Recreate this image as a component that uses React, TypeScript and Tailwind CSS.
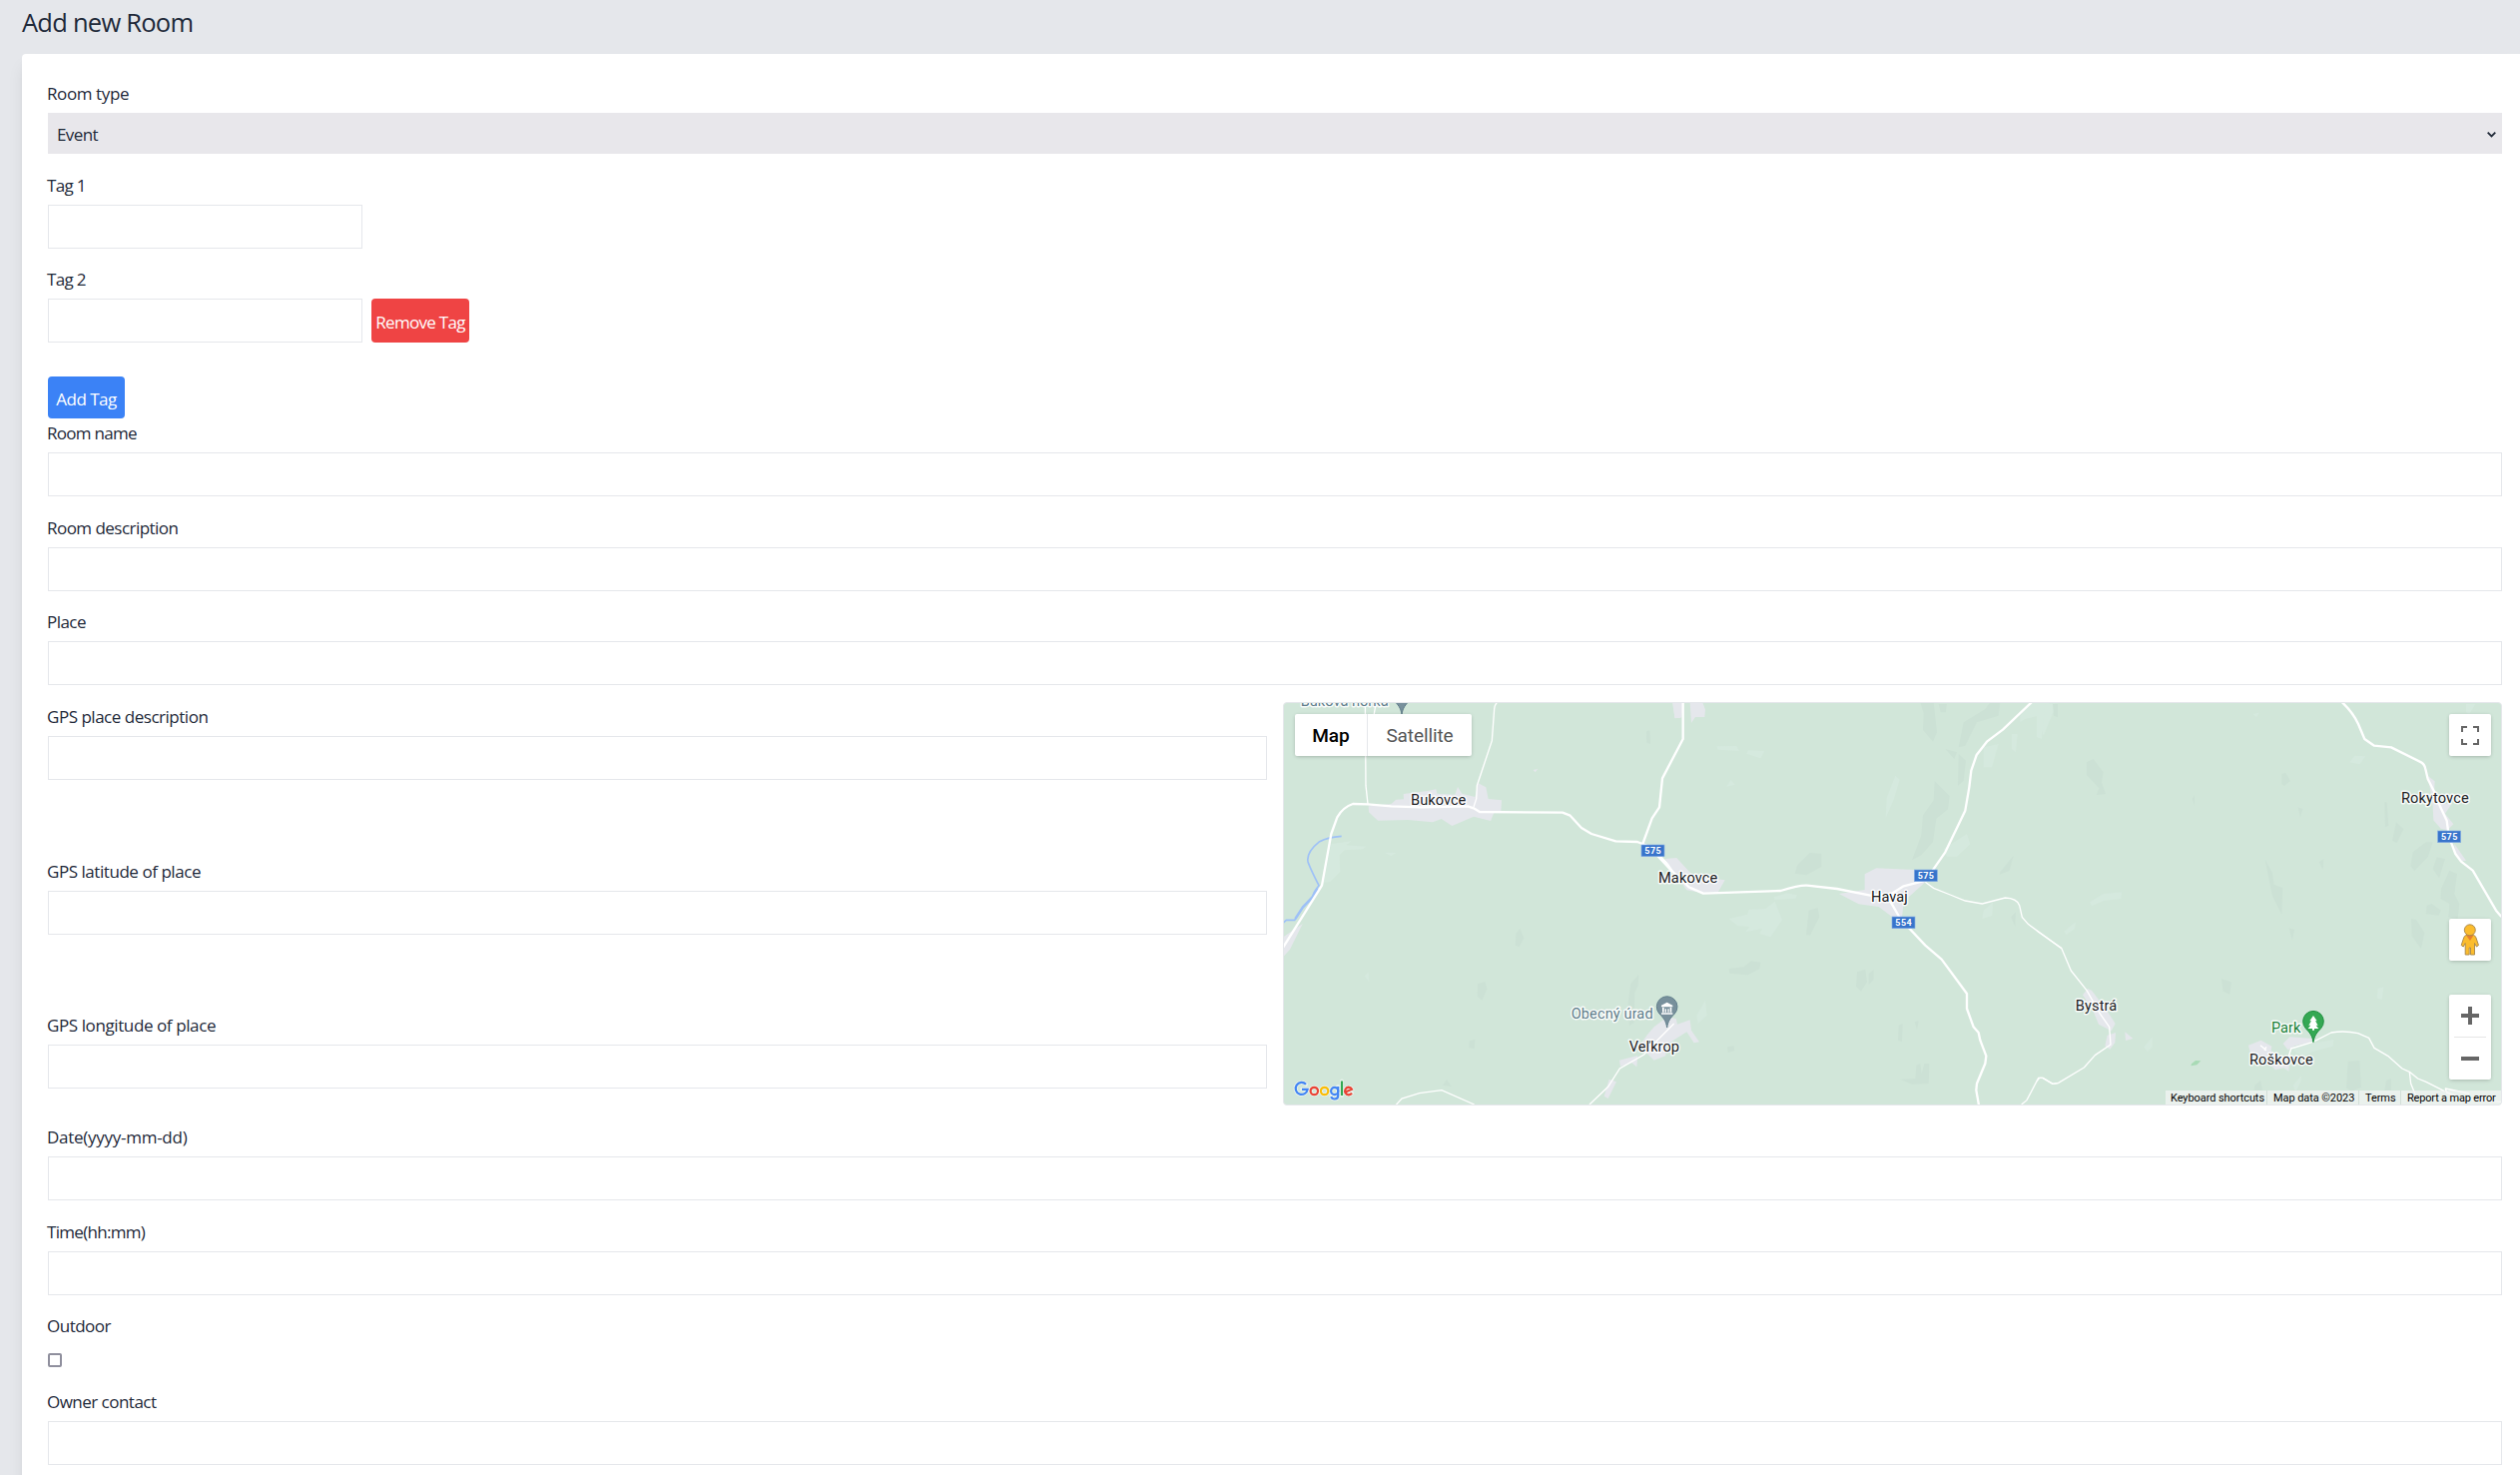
import type { ReactNode } from "react";

type FieldProps = { label: string; tracking: string; className?: string; children?: ReactNode };

const inputClass = "block h-11 w-full border border-gray-200 bg-white px-2 outline-none";

function Field({ label, tracking, className = "", children }: FieldProps) {
  return (
    <div className={className}>
      <label className={`-ml-px mb-[5px] block h-[29px] whitespace-nowrap leading-[29px] ${tracking}`}>{label}</label>
      {children ?? <input className={inputClass} />}
    </div>
  );
}

type LabelProps = { x: number; y: number; w: number; color?: string; children: string };

/* Place name with the white halo used on map tiles */
function Place({ x, y, w, color = "#202124", children }: LabelProps) {
  return (
    <text x={x} y={y} textLength={w} fontSize="44" fill={color} stroke="#fff" strokeWidth="9" strokeLinejoin="round" strokeOpacity=".85" paintOrder="stroke">
      {children}
    </text>
  );
}

function Shield({ x, y, children }: { x: number; y: number; children: string }) {
  return (
    <g>
      <rect x={x} y={y} width="69" height="35" fill="#3874cb" stroke="#86aee4" strokeWidth="2" />
      <text x={x + 34.5} y={y + 27} textAnchor="middle" textLength="49" fontSize="27" fontWeight="700" fill="#fff">
        {children}
      </text>
    </g>
  );
}

function Pin({ x, y, fill, stroke, children }: { x: number; y: number; fill: string; stroke: string; children?: ReactNode }) {
  return (
    <g transform={`translate(${x} ${y})`}>
      <path d="M0 0C-3-22-12-30-23-42A31 31 0 1 1 23-42C12-30 3-22 0 0Z" fill={fill} stroke={stroke} strokeWidth="3" />
      {children}
    </g>
  );
}

function Terrain() {
  return (
    <>
      <g transform="translate(1270 690) scale(.33333)">
        <g fill="#d5e9de">
          <path d="M190 465l60-8-15 12 60 4-10 8-55 3-15 15 2 50-30 30-20 2z" />
          <path d="M350 491l35 1-15 9zM290 862l12-12 2 30z" />
        </g>
        <g fill="#cce1d5">
          <path d="M745 735l12-15 12 28-14 27-12-5zM630 885l22-6 6 22-15 34-14-12zM605 1057l17-5-2 29-16-3zM525 1190l12-18 15 22zM1090 885l24-28-2 35-10 20-2 90-14 10-4-70zM1137 130l9-4 2 38-10-3z" />
        </g>
        <g fill="#e5e7ec">
          <path d="M302 352L370 345 385 332 408 331 407 315 480 306 505 301 508 314 562 317 570 294 583 314 622 324 632 283 655 295 662 330 702 334 700 366 680 370 669 396 618 383 553 411 521 390 495 400 420 393 330 395 303 370Z" />
          <path d="M46 745L104 705 66 782 46 804ZM797 243l14-3-8 10z" />
          <path d="M1215 40l33 0-5 45-20 3z" />
          <path d="M1117 1070L1140 1038 1160 1015 1200 985 1226 990 1230 1007 1268 994 1272 1025 1296 1060 1280 1063 1258 1030 1230 1048 1195 1070 1195 1102 1160 1115 1140 1095ZM1056 1115l55-14-3 34-15-12-34 11zM1025 1172l22 8-25 50-12-7z" />
        </g>
        <g fill="none" stroke="#9ec1f7" strokeWidth="5">
          <path d="M221 442Q180 445 155 458 115 490 120 518 125 535 153 590 132 615 134 628L105 655 80 694H55L46 702" />
          <path d="M150 600L136 622 105 655 82 690" strokeWidth="7" />
        </g>
        <g fill="none" stroke="#fff" strokeWidth="4">
          <path d="M292 40L294 290 300 345M324 45L318 80M688 40Q680 50 680 60L673 155 628 290 626 330 618 354M1220 1005L1160 1065 1130 1098 1057 1140 1022 1195 966 1248M384 1250L402 1230 455 1214 522 1205 620 1248" />
        </g>
        <g fill="none" stroke="#fff" strokeWidth="7" strokeLinejoin="round">
          <path d="M46 775L162 590 190 435 208 385Q225 355 255 345L300 346 370 352 460 355 600 352 618 358 636 369 885 371 908 380 942 417 972 435 1045 457 1110 459 1150 475 1190 515 1245 570" />
        </g>
      </g>
      <g transform="translate(1640 690) scale(.33333)">
        <g fill="#d5e9de">
          <path d="M238 172l60-1 8 15-64-4zM333 184l49 2-12 22-42-14zM268 293l12-20 14 14zM775 260l13 12-18 60-24 55 3-60zM275 690l55-13 5-15 50-2 28-22 22 55-35 52-33-10 8-15-50 10 12-16-35-2zM410 625l40-12 30 6-5 10-62 4zM920 480l70-45 10 30-40 38-30 0zM1150 80l30-40h30l50 5-40 95-15-60-40 10-15 10zM1125 135h17l-5 55-12-10zM1040 175l45-10-20 70-25 0zM1040 665l28-25-2 40-30 10zM178 980l26-45 5 45-27 25z" />
        </g>
        <g fill="#cce1d5">
          <path d="M850 40h40l10 90-12 28-30-35 2-50zM905 45h24l-2 25-16 0zM980 100l65-40 15-20h30l-5 40-65 20-35 70-20 5zM925 180l35 10-8 20zM965 195l22 20-7 60-17 15zM893 276l45 45-5 40-35 28-10 70-35 40-28 15 28-75 5-60 32-45zM480 530l38-38 35 2v40l-45 25-35-5zM1090 550l40-50-12 45-30 12zM510 710l5-45 27-8 5 28-28 55-12-2zM275 840l45-5 22-18 28 4-3 20-35 18-55-5zM660 850l25-8 5 38-18 28-15-15zM695 855l15-12v30l-15 15zM785 1010l12-5-2 55-12-5zM838 1130l12-5 4 30 8-30h15l-2 60-50 2-35-15 45-2zM270 1075l20-3 2 15-20 5zM1123 685l14-15-2 45zM27 127l10-3 2 40-10-5zM833 1000l12-3-5 25z" />
        </g>
        <g fill="#e5e7ec">
          <path d="M107 40h33l-10 47h-18zM158 40h38l8 22-2 22-28 0-12 18zM83 510l35-3 50 55 95 12-20 35-50 3-45-8zM606 615l77-12v-47l35-18 115 5 10 25 22 12-65 58-5 48-30-2-40-30-60-8z" />
        </g>
        <g fill="none" stroke="#fff" strokeWidth="4">
          <path d="M865 580L890 598 940 618 985 636 1036 645 1105 627Q1140 628 1148 650L1156 685 1174 706 1262 770 1272 778M1154 1248L1170 1235 1205 1168H1218L1248 1186 1265 1184" />
        </g>
        <g fill="none" stroke="#fff" strokeWidth="7" strokeLinejoin="round">
          <path d="M137 40V150L75 268 66 355 44 388 16 465M60 500L100 543 155 595 198 614 430 606Q490 588 510 590L600 600 700 620 760 617 800 592 866 575 925 490 985 365 997 295 1003 245 1019 198 1050 158 1098 122 1184 40M760 638L790 690 865 770 914 812 990 915V960L1010 1015 1025 1032 1030 1055 1048 1102 1045 1125 1020 1185 1018 1205 1026 1250" />
        </g>
      </g>
      <g transform="translate(2040 690) scale(.33333)">
        <g fill="#d5e9de">
          <path d="M0 40h25l-10 110L0 145zM160 640l40-25 55-5-2 20-50 5-38 16zM82 728l35-28-3 20-25 18zM940 220l15-20 33 2-18 24zM650 75l18-4-8 14zM1290 45h28l-18 30-10-5zM322 1075l25-30v30l-15 14zM1025 900l17-5-5 38-15-5zM770 1085l10-12 112-20-2 20-60 16-30 15zM770 1190l25-30-2 20-15 30z" />
        </g>
        <g fill="#cce1d5">
          <path d="M150 220l20-10 30 40-5 30 12 35-28 3 8-20-37-40zM48 45h15v40l-12-5zM736 255l12-4 14 25-18 15-8-5zM785 355l14 5-7 26zM467 330l7-12v32zM1045 340h7l5 70-10 5zM1080 400l22 20-20 42-14-7zM1130 490l40-30h20l-15 45-40 42-12-15zM1190 540l12-35 25 5-18 58zM1215 600l25-55 23 10-8 60 15 30-5 45-28-5 3-40-26-15zM1172 650l15-5 28 20-8 15-38-5zM1125 690l15 2 25 40-10 48-28-38zM686 512l22 40 5 35 26 10-3 80-28-55zM848 520l14-10-2 33zM555 870l30 10-5 37-20-10zM758 718l16 5-6 32zM935 1118l35-2 5 80-30 12-15-10zM655 1190l18-15 5 30h-25zM1050 1175l15-5v35h-20z" />
        </g>
        <path d="M465 1126l12-10 16 1-12 12-18 3z" fill="#a8dab5" />
        <g fill="#e5e7ec">
          <path d="M153 900l12 5 45 60 26 40-12 22-38-20-20-48-28-40zM212 1040l25-8-2 30-15 20-15-10zM265 1030l24 20-22 6zM1176 262l20 15-2 35 25 32h28l-20 30 25 32-18 18-20-5-22-25-2-42zM1255 465l35 50-12 2-22-25zM636 1070l38-15 32 18-2 12 20 25 36 0-3 38-15-10-25 6-30-30-40-2zM740 1065l20-20 70 5-10 12-45 10-20 12z" />
        </g>
        <g fill="none" stroke="#fff" strokeWidth="4" strokeLinejoin="round">
          <path d="M0 726L74 778 103 846 150 905 190 975 218 1015 222 1068 175 1100 142 1137 65 1183 48 1186 18 1168H8L0 1178M672 1070L690 1085M690 1075L684 1085M755 1110L764 1080 830 1060 885 1032Q925 1025 965 1034L998 1048 1014 1078 1055 1102 1098 1140 1120 1150 1145 1170 1170 1180 1225 1208M1120 1150L1124 1185 1140 1225M1300 1215L1228 1200 1232 1212 1290 1232 1396 1240" />
        </g>
        <g fill="none" stroke="#fff" strokeWidth="7" strokeLinejoin="round">
          <path d="M918 40Q950 70 966 105L985 150 1014 170 1065 175 1155 220Q1165 225 1168 240L1175 270 1195 310 1213 355 1232 395 1236 425 1246 463 1258 495 1275 518 1310 545 1380 665 1396 684" />
        </g>
      </g>
    </>
  );
}

function MapLabels() {
  return (
    <g fontFamily="Roboto, sans-serif">
      <g transform="translate(1270 690) scale(.33333)">
        <Place x={98} y={50} w={264} color="#607d8b">Buková hôrka</Place>
        <Pin x={402} y={77} fill="#78909c" stroke="#607d8b" />
        <Place x={429} y={349} w={166}>Bukovce</Place>
        <Shield x={1122} y={468}>575</Shield>
        <Place x={911} y={989} w={246} color="#607d8b">Obecný úrad</Place>
        <Place x={1085} y={1089} w={151}>Veľkrop</Place>
        <Pin x={1199} y={1017} fill="#78909c" stroke="#607d8b">
          <path d="M0-76L17-67V-62H-17V-67ZM-14-61H-9V-46H-14ZM9-61H14V-46H9ZM-6-56H-2V-46H-6ZM2-56H6V-46H2ZM-17-44H17V-40H-17Z" fill="#fff" />
        </Pin>
      </g>
      <g transform="translate(1640 690) scale(.33333)">
        <Place x={63} y={583} w={178}>Makovce</Place>
        <Place x={702} y={638} w={110}>Havaj</Place>
        <Shield x={832} y={543}>575</Shield>
        <Shield x={765} y={684}>554</Shield>
      </g>
      <g transform="translate(2040 690) scale(.33333)">
        <Place x={1095} y={343} w={203}>Rokytovce</Place>
        <Shield x={1205} y={426}>575</Shield>
        <Place x={116} y={966} w={125}>Bystrá</Place>
        <Place x={705} y={1033} w={88} color="#188038">Park</Place>
        <Place x={639} y={1128} w={191}>Roškovce</Place>
        <Pin x={831} y={1061} fill="#34a853" stroke="#1e8e3e">
          <path d="M0-80L11-64H6L14-51H8L16-41H3V-36H-3V-41H-16L-8-51H-14L-6-64H-11Z" fill="#fff" />
        </Pin>
      </g>
    </g>
  );
}

function MapPanel() {
  const control = "flex w-[42px] items-center rounded-[2px] bg-white shadow-[0_1px_4px_-1px_rgba(0,0,0,0.3)]";
  return (
    <div className="relative h-[404px] w-[1221px] overflow-hidden rounded border border-gray-200 bg-[#d1e6d9] font-[Roboto,sans-serif]">
      <svg className="absolute inset-0 h-full w-full" viewBox="1286 704 1219 402">
        <Terrain />
        <MapLabels />
      </svg>
      <div className="absolute left-[11px] top-[11px] flex h-[42px] rounded-[2px] bg-white text-[19px] leading-[44px] shadow-[0_1px_4px_-1px_rgba(0,0,0,0.3)]">
        <button className="w-[73px] border-r border-gray-200 text-center font-medium text-black">Map</button>
        <button className="w-[104px] text-center tracking-[-0.1px] text-[#565656]">Satellite</button>
      </div>
      <button className={`absolute right-[10px] top-[11px] h-[42px] justify-center ${control}`}>
        <svg className="h-[19px] w-[18px]" viewBox="0 0 18 19" fill="none" stroke="#666" strokeWidth="2">
          <path d="M1 6V1H6M12 1H17V6M17 13V18H12M6 18H1V13" />
        </svg>
      </button>
      <button className={`absolute right-[10px] top-[216px] h-[42px] justify-center ${control}`}>
        <svg className="h-[32px] w-[20px]" viewBox="0 0 20 32" fill="#fbbc2d" stroke="#a58549" strokeWidth=".9">
          <path d="M6 11.5H13.500Q15.500 12 16 14L18.500 21.500 16.500 23 14.500 19.500V31H10.500V24H9.200V31H5.200V19.500L3.200 23 1.200 21.500 3.700 14Q4.200 12 6 11.500Z" />
          <path d="M6 11.500H13.500L10 17Z" fill="#e67e2e" stroke="none" />
          <circle cx="9.800" cy="6.300" r="5.500" />
        </svg>
      </button>
      <div className={`absolute right-[10px] top-[292px] h-[85px] flex-col ${control}`}>
        <button className="flex h-[42px] w-full items-center justify-center">
          <svg className="h-[18px] w-[18px]" viewBox="0 0 18 18" fill="#666">
            <path d="M7 0H11V7H18V11H11V18H7V11H0V7H7Z" />
          </svg>
        </button>
        <div className="h-px w-8 bg-[#e6e6e6]" />
        <button className="flex h-[42px] w-full items-center justify-center">
          <span className="h-1 w-[18px] bg-[#666]" />
        </button>
      </div>
      <svg className="absolute bottom-0 left-[9px] h-[28px] w-[66px]" viewBox="0 0 66 28">
        <g fill="none" stroke="#fff" strokeWidth="4" strokeOpacity=".5" strokeLinecap="round">
          <GoogleStrokes />
        </g>
        <g fill="none" strokeWidth="2.200">
          <GoogleStrokes colored />
        </g>
      </svg>
      <div className="absolute bottom-0 right-0 flex h-[14px] whitespace-nowrap text-[11px] leading-[16px] tracking-[-0.08px] text-black">
        <span className="w-[102px] border-r border-[#d3dfd8] bg-[#f5f5f5]/70 pl-[5px]">Keyboard shortcuts</span>
        <span className="w-[92px] border-r border-[#d3dfd8] bg-[#f5f5f5]/70 pl-[6px]">Map data ©2023</span>
        <span className="w-[42px] border-r border-[#d3dfd8] bg-[#f5f5f5]/70 pl-[6px]">Terms</span>
        <span className="w-[100px] bg-[#f5f5f5]/70 pl-[6px] tracking-[-0.18px]">Report a map error</span>
      </div>
    </div>
  );
}

/* Logo mark built from ring and bar strokes */
function GoogleStrokes({ colored = false }: { colored?: boolean }) {
  const c = (v: string) => (colored ? v : undefined);
  return (
    <>
      <path d="M13 7.800A6 6 0 1 0 14.600 12.800H9" stroke={c("#4285f4")} />
      <circle cx="21.300" cy="14.500" r="3.700" stroke={c("#ea4335")} />
      <circle cx="31.600" cy="14.500" r="3.700" stroke={c("#fbbc05")} />
      <path d="M45.200 10V19Q45.200 22.500 41.700 22.500 39 22.500 38.200 20.200" stroke={c("#4285f4")} />
      <circle cx="41.700" cy="14.500" r="3.600" stroke={c("#4285f4")} />
      <path d="M49 4.500V19.100" stroke={c("#34a853")} />
      <path d="M52 15.700L59 12.700Q58 10.700 55.600 10.700A3.800 3.800 0 1 0 59 16.700" stroke={c("#ea4335")} />
    </>
  );
}

export default function App() {
  return (
    <div className="h-[1477px] w-[2524px] overflow-hidden bg-[#e5e7eb] pl-[22px] font-['Open_Sans',sans-serif] text-[17px] text-gray-800">
      <h1 className="h-[54px] text-[25.5px] leading-[45px] tracking-[-0.75px]">Add new Room</h1>
      <div className="h-[1600px] rounded-tl bg-white pl-[26px] pr-[18px] pt-[25px] shadow-[0_11px_17px_-3px_rgba(0,0,0,0.1),0_4px_7px_-4px_rgba(0,0,0,0.1)]">
        <Field label="Room type" tracking="tracking-[-0.4px]">
          <div className="flex h-[41px] items-center justify-between bg-[#e8e7eb] pl-[9px] pr-[6px]">
            <span className="pt-[3px] leading-6 tracking-[-0.6px]">Event</span>
            <svg className="mt-[3px] h-[6px] w-[9px]" viewBox="0 0 9 6" fill="none" stroke="#1f2937" strokeWidth="1.800">
              <path d="M.7 .7L4.500 4.500 8.300 .7" />
            </svg>
          </div>
        </Field>
        <Field label="Tag 1" tracking="tracking-[-0.7px]" className="mt-[17px] w-[315px]" />
        <div className="mt-4 flex items-end gap-[9px]">
          <Field label="Tag 2" tracking="tracking-[-0.7px]" className="w-[315px]" />
          <button className="h-11 w-[98px] whitespace-nowrap rounded bg-[#ef4444] pt-1 tracking-[-0.7px] text-white">Remove Tag</button>
        </div>
        <button className="mt-[34px] block h-[42px] w-[77px] whitespace-nowrap rounded bg-[#3b82f6] pt-1 tracking-[-0.5px] text-white">Add Tag</button>
        <Field label="Room name" tracking="tracking-[-0.7px]" />
        <Field label="Room description" tracking="tracking-[-0.53px]" className="mt-[17px]" />
        <Field label="Place" tracking="tracking-[-0.54px]" className="mt-4" />
        <div className="mt-[17px] flex gap-4">
          <div className="w-[1221px]">
            <Field label="GPS place description" tracking="tracking-[-0.48px]" />
            <Field label="GPS latitude of place" tracking="tracking-[-0.45px]" className="mt-[77px]" />
            <Field label="GPS longitude of place" tracking="tracking-[-0.4px]" className="mt-[76px]" />
          </div>
          <MapPanel />
        </div>
        <Field label="Date(yyyy-mm-dd)" tracking="tracking-[-0.27px]" className="mt-[17px]" />
        <Field label="Time(hh:mm)" tracking="tracking-[-0.7px]" className="mt-[17px]" />
        <Field label="Outdoor" tracking="tracking-[-0.5px]" className="mt-4">
          <input type="checkbox" className="mt-[13px] block size-[14px] appearance-none rounded-[2px] border-2 border-[#8f8f9d] bg-white" />
        </Field>
        <Field label="Owner contact" tracking="tracking-[-0.52px]" className="mt-5" />
      </div>
    </div>
  );
}
